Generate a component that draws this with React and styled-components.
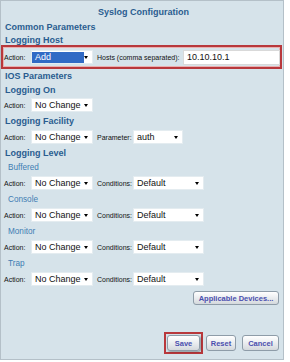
import React from 'react'
import styled, { createGlobalStyle } from 'styled-components'

const GlobalStyle = createGlobalStyle`
  html, body {
    margin: 0;
    padding: 0;
    background: #ffffff;
  }
  body {
    font-family: "Liberation Sans", Arial, sans-serif;
  }
`

function Select({ value, width, selected }) {
  return (
    <SelectBox $w={width}>
      <SelectText $selected={selected}>{value}</SelectText>
      <Arrow />
    </SelectBox>
  )
}

function ActionRow({ second, secondValue, secondWidth }) {
  return (
    <Row>
      <Label $w={27}>Action:</Label>
      <Select value="No Change" width={62} />
      {second && (
        <>
          <Label $w={36} $ml={4}>{second}:</Label>
          <Select value={secondValue} width={secondWidth} />
        </>
      )}
    </Row>
  )
}

function App() {
  return (
    <>
      <GlobalStyle />
      <Panel>
        <Title>Syslog Configuration</Title>
        <Heading $h={14}>Common Parameters</Heading>
        <Heading $h={11}>Logging Host</Heading>
        <HostBox>
          <Label $w={27}>Action:</Label>
          <Select value="Add" width={62} selected />
          <Label $w={86} $ml={4}>Hosts (comma separated):</Label>
          <HostInput>10.10.10.1</HostInput>
        </HostBox>
        <Heading $h={13}>IOS Parameters</Heading>
        <Heading $h={15}>Logging On</Heading>
        <ActionRow />
        <Heading $h={16}>Logging Facility</Heading>
        <ActionRow second="Parameter" secondValue="auth" secondWidth={50} />
        <Heading $h={15}>Logging Level</Heading>
        <SubHeading $h={15}>Buffered</SubHeading>
        <ActionRow second="Conditions" secondValue="Default" secondWidth={71} />
        <SubHeading $h={16}>Console</SubHeading>
        <ActionRow second="Conditions" secondValue="Default" secondWidth={71} />
        <SubHeading $h={16}>Monitor</SubHeading>
        <ActionRow second="Conditions" secondValue="Default" secondWidth={71} />
        <SubHeading $h={16}>Trap</SubHeading>
        <ActionRow second="Conditions" secondValue="Default" secondWidth={71} />
        <DevicesBar>
          <Button $w={86} $h={14}>Applicable Devices...</Button>
        </DevicesBar>
        <Footer>
          <Highlight>
            <Button $w={33} $h={16} $shadow>Save</Button>
          </Highlight>
          <Button $w={30} $h={16}>Reset</Button>
          <Button $w={37} $h={16}>Cancel</Button>
        </Footer>
      </Panel>
    </>
  )
}

export default App

const Panel = styled.div`
  width: 284px;
  height: 360px;
  box-sizing: border-box;
  background: #d6e3ea;
  border: 1px solid #b4c0c8;
  padding: 3px 0 0 3px;
  display: flex;
  flex-direction: column;
`

const Title = styled.div`
  height: 16px;
  line-height: 16px;
  text-align: center;
  font-size: 9px;
  font-weight: bold;
  color: #2a5d90;
`

const Heading = styled.div`
  height: ${p => p.$h}px;
  display: flex;
  align-items: center;
  padding-left: 1px;
  font-size: 9px;
  font-weight: bold;
  color: #2a5d90;
  white-space: nowrap;
`

const SubHeading = styled.div`
  height: ${p => p.$h}px;
  display: flex;
  align-items: center;
  padding-left: 4px;
  font-size: 8.2px;
  color: #3f7db3;
`

const Row = styled.div`
  height: 16px;
  display: flex;
  align-items: center;
`

const HostBox = styled.div`
  height: 24px;
  width: 281px;
  box-sizing: border-box;
  margin-left: -3px;
  padding-left: 1px;
  border: 2px solid #b8383c;
  box-shadow: inset 0 0 0 1px #e9b0b0;
  display: flex;
  align-items: center;
`

const Label = styled.span`
  width: ${p => p.$w}px;
  margin-left: ${p => p.$ml || 0}px;
  flex: none;
  font-size: 7px;
  color: #111;
  white-space: nowrap;
`

const SelectBox = styled.div`
  width: ${p => p.$w}px;
  height: 14px;
  flex: none;
  box-sizing: border-box;
  position: relative;
  background: #ffffff;
  border: 1px solid #e4ecf0;
  display: flex;
  align-items: center;
`

const SelectText = styled.span`
  height: 11px;
  line-height: 11px;
  width: ${p => (p.$selected ? '49px' : 'auto')};
  padding-left: 3px;
  font-size: 9px;
  color: ${p => (p.$selected ? '#ffffff' : '#111111')};
  background: ${p => (p.$selected ? '#316ac5' : 'transparent')};
  white-space: nowrap;
`

const Arrow = styled.span`
  position: absolute;
  right: 4px;
  top: 5px;
  width: 0;
  height: 0;
  border-left: 2.5px solid transparent;
  border-right: 2.5px solid transparent;
  border-top: 3px solid #000;
`

const HostInput = styled.div`
  width: 97px;
  height: 15px;
  flex: none;
  box-sizing: border-box;
  background: #ffffff;
  border: 1px solid #d9d9d9;
  padding-left: 3px;
  font-size: 9px;
  line-height: 13px;
  color: #111;
`

const DevicesBar = styled.div`
  display: flex;
  justify-content: flex-end;
  padding-right: 4px;
  margin-top: 4px;
`

const Footer = styled.div`
  display: flex;
  align-items: center;
  justify-content: flex-end;
  padding-right: 4px;
  margin-top: 27px;
  gap: 3px;

  & > :last-child {
    margin-left: 3px;
  }
`

const Highlight = styled.div`
  border: 2px solid #b8383c;
  padding: 1px;
  display: flex;
`

const Button = styled.div`
  width: ${p => p.$w}px;
  height: ${p => p.$h}px;
  box-sizing: border-box;
  border: 1px solid #8e9ca8;
  border-radius: 3px;
  background: linear-gradient(#ffffff, #e6e9ec 60%, #d4d8dc);
  box-shadow: ${p => (p.$shadow ? '1px 1px 2px rgba(0,0,0,0.35)' : 'none')};
  display: flex;
  align-items: center;
  justify-content: center;
  font-size: 7.5px;
  font-weight: bold;
  color: #4a4fae;
  white-space: nowrap;
`
